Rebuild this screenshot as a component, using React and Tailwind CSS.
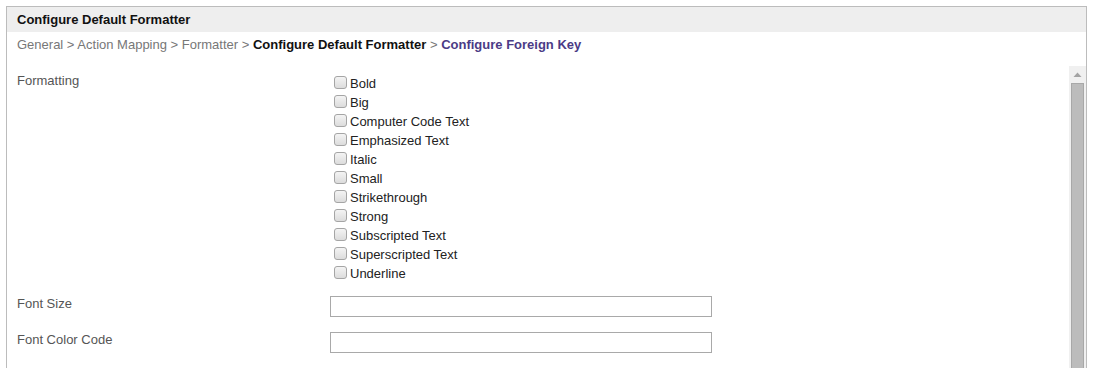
import React from "react";

const options = [
  "Bold",
  "Big",
  "Computer Code Text",
  "Emphasized Text",
  "Italic",
  "Small",
  "Strikethrough",
  "Strong",
  "Subscripted Text",
  "Superscripted Text",
  "Underline",
];

function Check({ label }) {
  return (
    <div className="flex h-[19px] items-start">
      <span className="mt-[2px] ml-[4px] mr-[3px] box-border h-[13px] w-[13px] rounded-[3px] border border-[#a5a5a5] bg-gradient-to-b from-[#f4f4f4] to-[#dcdcdc]" />
      <span className="leading-[19px] text-[#222]">{label}</span>
    </div>
  );
}

export default function App() {
  return (
    <div
      className="h-[368px] w-[1095px] overflow-hidden bg-white pt-[6px] pl-[6px] text-[13px]"
      style={{ fontFamily: '"Liberation Sans", Arial, sans-serif' }}
    >
      <div className="box-border h-[400px] w-[1081px] border border-[#bcbcbc]">
        <div className="h-[25px] bg-[#eeeeee] pl-[10px] font-bold leading-[25px] text-[#111]">
          Configure Default Formatter
        </div>
        <div className="pt-[3px] pl-[10px] leading-[19px] text-[#777]">
          General &gt; Action Mapping &gt; Formatter &gt;{" "}
          <span className="font-bold text-[#111]">Configure Default Formatter</span>{" "}
          &gt; <span className="font-bold text-[#4b3b86]">Configure Foreign Key</span>
        </div>
        <div className="mt-[12px] flex">
          <div className="flex-1 pt-[5px] pl-[10px]">
            <div className="flex">
              <div className="w-[313px] leading-[19px] text-[#555]">Formatting</div>
              <div className="mt-[3px]">
                {options.map((o) => (
                  <Check key={o} label={o} />
                ))}
              </div>
            </div>
            <div className="mt-[11px] flex h-[36px] items-start">
              <div className="w-[313px] leading-[19px] text-[#555]">Font Size</div>
              <div className="mt-[2px] box-border h-[21px] w-[382px] border border-[#a9a9a9] bg-white" />
            </div>
            <div className="flex h-[36px] items-start">
              <div className="w-[313px] leading-[19px] text-[#555]">Font Color Code</div>
              <div className="mt-[2px] box-border h-[21px] w-[382px] border border-[#a9a9a9] bg-white" />
            </div>
          </div>
          <div className="flex w-[17px] flex-col items-center bg-[#f0f0f0]">
            <svg width="9" height="6" viewBox="0 0 9 6" className="mt-[6px]">
              <path d="M4.5 0.5 L8.5 5 L0.5 5 Z" fill="#a3a3a3" />
            </svg>
            <div className="mt-[5px] box-border h-[400px] w-[13px] border border-[#a8a8a8] bg-[#bcbcbc]" />
          </div>
        </div>
      </div>
    </div>
  );
}
